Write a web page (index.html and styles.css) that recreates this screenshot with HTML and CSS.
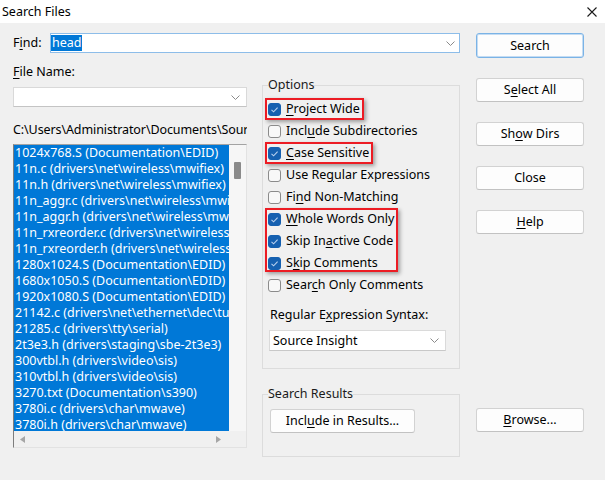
FILE: index.html
```html
<!DOCTYPE html>
<html>
<head>
<meta charset="utf-8">
<title>Search Files</title>
<link rel="stylesheet" href="styles.css">
</head>
<body>
<div class="window">
  <div class="titlebar">
    <span class="title-text">Search Files</span>
    <svg class="close-icon" width="10" height="10" viewBox="0 0 10 10"><path d="M0.5 0.5L9.5 9.5M9.5 0.5L0.5 9.5" stroke="#1a1a1a" stroke-width="1.1" fill="none"/></svg>
  </div>
  <div class="main">
    <div class="left">
      <div class="find-row">
        <span class="find-label">F<u>i</u>nd:</span>
        <div class="combo find-combo">
          <span class="sel">head</span>
          <svg class="chev" width="9" height="5" viewBox="0 0 9 5"><path d="M0.5 0.5L4.5 4.5L8.5 0.5" stroke="#8a8a8a" fill="none"/></svg>
        </div>
      </div>
      <div class="cols">
        <div class="files">
          <div class="field-label"><u>F</u>ile Name:</div>
          <div class="combo name-combo">
            <span></span>
            <svg class="chev" width="9" height="5" viewBox="0 0 9 5"><path d="M0.5 0.5L4.5 4.5L8.5 0.5" stroke="#8a8a8a" fill="none"/></svg>
          </div>
          <div class="path">C:\Users\Administrator\Documents\Sourc</div>
          <div class="listbox">
            <div class="items">
              <div class="item">1024x768.S (Documentation\EDID)</div>
              <div class="item">11n.c (drivers\net\wireless\mwifiex)</div>
              <div class="item">11n.h (drivers\net\wireless\mwifiex)</div>
              <div class="item">11n_aggr.c (drivers\net\wireless\mwifiex)</div>
              <div class="item">11n_aggr.h (drivers\net\wireless\mwifiex)</div>
              <div class="item">11n_rxreorder.c (drivers\net\wireless\mwifiex)</div>
              <div class="item">11n_rxreorder.h (drivers\net\wireless\mwifiex)</div>
              <div class="item">1280x1024.S (Documentation\EDID)</div>
              <div class="item">1680x1050.S (Documentation\EDID)</div>
              <div class="item">1920x1080.S (Documentation\EDID)</div>
              <div class="item">21142.c (drivers\net\ethernet\dec\tulip)</div>
              <div class="item">21285.c (drivers\tty\serial)</div>
              <div class="item">2t3e3.h (drivers\staging\sbe-2t3e3)</div>
              <div class="item">300vtbl.h (drivers\video\sis)</div>
              <div class="item">310vtbl.h (drivers\video\sis)</div>
              <div class="item">3270.txt (Documentation\s390)</div>
              <div class="item">3780i.c (drivers\char\mwave)</div>
              <div class="item">3780i.h (drivers\char\mwave)</div>
            </div>
            <div class="vscroll"><div class="thumb"></div></div>
            <div class="hscroll">
              <svg width="5" height="7" viewBox="0 0 5 7"><path d="M5 0L0 3.5L5 7Z" fill="#a6a6a6"/></svg>
              <svg width="5" height="7" viewBox="0 0 5 7"><path d="M0 0L5 3.5L0 7Z" fill="#a6a6a6"/></svg>
            </div>
            <div class="corner"></div>
          </div>
        </div>
        <div class="groups">
          <fieldset class="group options">
            <legend>Options</legend>
            <div class="hl one">
              <div class="opt"><span class="cb on"><svg width="11" height="11" viewBox="0 0 11 11"><path d="M2.5 5.8L4.6 7.8L8.6 3.6" stroke="#b9d0ee" stroke-width="1.1" fill="none"/></svg></span><span><u>P</u>roject Wide</span></div>
            </div>
            <div class="opt"><span class="cb"></span><span>Incl<u>u</u>de Subdirectories</span></div>
            <div class="hl one">
              <div class="opt"><span class="cb on"><svg width="11" height="11" viewBox="0 0 11 11"><path d="M2.5 5.8L4.6 7.8L8.6 3.6" stroke="#b9d0ee" stroke-width="1.1" fill="none"/></svg></span><span><u>C</u>ase Sensitive</span></div>
            </div>
            <div class="opt"><span class="cb"></span><span>Use Re<u>g</u>ular Expressions</span></div>
            <div class="opt"><span class="cb"></span><span>Fi<u>n</u>d Non-Matching</span></div>
            <div class="hl three">
              <div class="opt"><span class="cb on"><svg width="11" height="11" viewBox="0 0 11 11"><path d="M2.5 5.8L4.6 7.8L8.6 3.6" stroke="#b9d0ee" stroke-width="1.1" fill="none"/></svg></span><span><u>W</u>hole Words Only</span></div>
              <div class="opt"><span class="cb on"><svg width="11" height="11" viewBox="0 0 11 11"><path d="M2.5 5.8L4.6 7.8L8.6 3.6" stroke="#b9d0ee" stroke-width="1.1" fill="none"/></svg></span><span>Skip In<u>a</u>ctive Code</span></div>
              <div class="opt"><span class="cb on"><svg width="11" height="11" viewBox="0 0 11 11"><path d="M2.5 5.8L4.6 7.8L8.6 3.6" stroke="#b9d0ee" stroke-width="1.1" fill="none"/></svg></span><span>S<u>k</u>ip Comments</span></div>
            </div>
            <div class="opt"><span class="cb"></span><span>Sear<u>c</u>h Only Comments</span></div>
            <div class="regex-label">Regular E<u>x</u>pression Syntax:</div>
            <div class="combo regex-combo">
              <span>Source Insight</span>
              <svg class="chev" width="9" height="5" viewBox="0 0 9 5"><path d="M0.5 0.5L4.5 4.5L8.5 0.5" stroke="#8a8a8a" fill="none"/></svg>
            </div>
          </fieldset>
          <fieldset class="group results">
            <legend>Search Results</legend>
            <button class="btn include-btn">Incl<u>u</u>de in Results...</button>
          </fieldset>
        </div>
      </div>
    </div>
    <div class="right">
      <button class="btn default">Search</button>
      <button class="btn">S<u>e</u>lect All</button>
      <button class="btn">Sh<u>o</u>w Dirs</button>
      <button class="btn">Close</button>
      <button class="btn"><u>H</u>elp</button>
      <button class="btn browse"><u>B</u>rowse...</button>
    </div>
  </div>
</div>
</body>
</html>
```

FILE: styles.css
```css
html, body {
  margin: 0;
  padding: 0;
}
body {
  background: #f0f0f0;
  font-family: "Noto Sans", "Open Sans", sans-serif;
  font-size: 12.5px;
  line-height: 16px;
  color: #000;
  width: 605px;
  height: 480px;
  overflow: hidden;
}
u {
  text-decoration-thickness: 1px;
  text-underline-offset: 2px;
}
.titlebar {
  height: 23px;
  background: #fff;
  display: flex;
  align-items: center;
  justify-content: space-between;
  padding: 0 8px 0 2px;
}
.title-text {
  color: #000;
}
.main {
  display: flex;
  padding: 10px 0 0 13px;
}
.left {
  width: 447px;
}
.find-row {
  display: flex;
  align-items: center;
  height: 20px;
}
.find-label {
  width: 37px;
}
.combo {
  display: flex;
  align-items: center;
  justify-content: space-between;
  background: #fff;
  box-sizing: border-box;
}
.find-combo {
  width: 410px;
  height: 20px;
  border: 1px solid #8dbde9;
  padding-right: 4px;
}
.sel {
  background: #0078d7;
  color: #fff;
  padding: 0 1px;
  line-height: 16px;
}
.cols {
  display: flex;
  align-items: flex-start;
}
.files {
  width: 234px;
  padding-top: 11px;
}
.name-combo {
  margin-top: 7px;
  height: 20px;
  border: 1px solid #d9d9d9;
  border-bottom-color: #c4c4c4;
  padding-right: 6px;
}
.path {
  margin-top: 15px;
  white-space: nowrap;
  overflow: hidden;
  letter-spacing: -0.1px;
}
.listbox {
  margin-top: 6px;
  display: grid;
  grid-template-columns: 215px 17px;
  grid-template-rows: 286px 16px;
  border: 1px solid;
  border-color: #a3a3a3 #e2e2e2 #e2e2e2 #7d7d7d;
}
.items {
  background: #0078d7;
  color: #fff;
  overflow: hidden;
}
.item {
  height: 16px;
  padding-left: 1px;
  white-space: nowrap;
}
.vscroll {
  background: #f6f6f6;
  padding: 17px 0 0 5px;
}
.thumb {
  width: 7px;
  height: 17px;
  background: #8a8a8a;
  border-radius: 1px;
}
.hscroll {
  background: #f0f0f0;
  display: flex;
  align-items: center;
  justify-content: space-between;
  padding: 0 8px 0 6px;
}
.corner {
  background: #f0f0f0;
}
.groups {
  width: 198px;
  margin-left: 15px;
  margin-top: 24px;
}
.group {
  margin: 0;
  min-width: 0;
  box-sizing: border-box;
  width: 198px;
  border: 1px solid #dcdcdc;
}
.group legend {
  padding: 0;
  line-height: 16px;
  color: #1a1a1a;
}
.options {
  padding: 5px 5px 17px 5px;
}
.results {
  margin-top: 17px;
  padding: 7px 5px 23px 5px;
}
.opt {
  display: flex;
  align-items: center;
  gap: 5px;
  height: 22px;
  white-space: nowrap;
}
.cb {
  width: 13px;
  height: 13px;
  box-sizing: border-box;
  border: 1px solid #8b8b8b;
  border-radius: 3px;
  background: #f8f8f8;
  flex: none;
  display: flex;
  align-items: center;
  justify-content: center;
}
.cb.on {
  background: #1560b0;
  border-color: #1560b0;
}
.hl {
  border: 2px solid #ec1c24;
  margin-left: -3px;
  padding: 0 2px 0 1px;
  width: fit-content;
  box-sizing: border-box;
  box-shadow: 2px 2px 4px rgba(0, 0, 0, 0.35);
}
.hl > .opt:first-child {
  margin-top: -2px;
}
.hl.one {
  height: 22px;
}
.hl.three {
  height: 64px;
  margin-bottom: 2px;
}
.regex-label {
  margin-top: 11px;
  padding-left: 2px;
}
.regex-combo {
  margin: 7px 0 0 1px;
  width: 177px;
  height: 21px;
  border: 1px solid #dadada;
  border-bottom-color: #c8c8c8;
  padding: 0 6px 0 3px;
}
.btn {
  font-family: inherit;
  font-size: inherit;
  line-height: 16px;
  color: #000;
  height: 24px;
  box-sizing: border-box;
  border: 1px solid #d2d2d2;
  border-bottom-color: #c2c2c2;
  border-radius: 3px;
  background: #fdfdfd;
  padding: 0;
  display: flex;
  align-items: center;
  justify-content: center;
}
.include-btn {
  width: 145px;
  margin-left: 2px;
}
.right {
  width: 108px;
  margin-left: 16px;
  display: flex;
  flex-direction: column;
  gap: 20px;
}
.btn.default {
  height: 25px;
  border: 1px solid #7ab3e6;
  box-shadow: inset 0 0 0 1px #c4dcf3;
}
.browse {
  margin-top: 154px;
}
```
